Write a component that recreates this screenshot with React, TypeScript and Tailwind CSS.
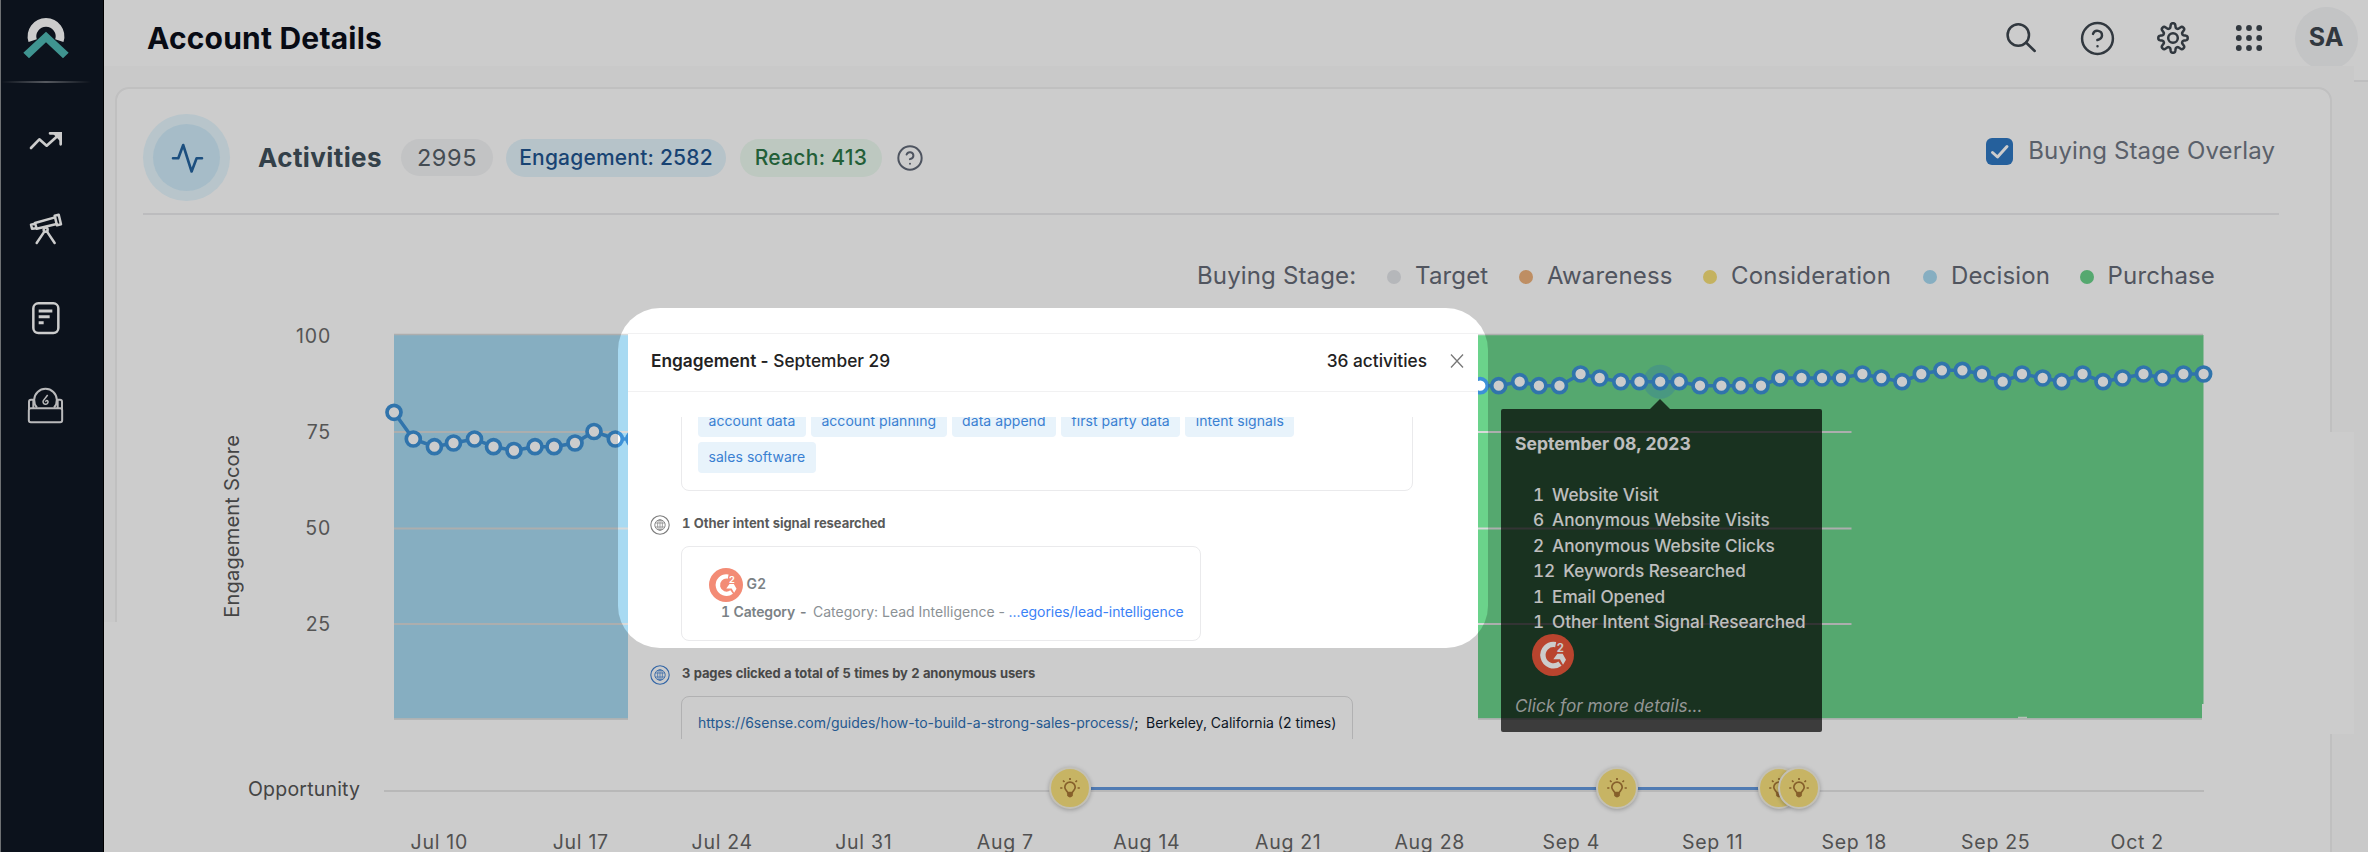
import React from "react";

const leftScores: [number, number][] = [
  [394, 412.3], [413.3, 439], [434.4, 446.7], [453.5, 443], [474.5, 439], [493.5, 446.7],
  [514, 450.5], [535, 446.7], [554, 446.7], [575, 443], [594, 431.5], [615.3, 439], [634, 439],
];

const rightScores: [number, number][] = [
  [1480.3, 385.7], [1498.7, 385.7], [1519.7, 381.7], [1538.9, 385.7], [1559.5, 385.7], [1580.6, 374],
  [1599.7, 378], [1620.8, 381.7], [1639.5, 381.7], [1660.2, 381.7], [1679.3, 381.7], [1700, 385.7],
  [1721.4, 385.7], [1740.6, 385.7], [1761, 385.7], [1780, 378], [1801.5, 378], [1822, 378],
  [1841, 378], [1862.4, 374], [1881.4, 378], [1902, 381.7], [1921.3, 374], [1941.9, 370.3],
  [1962.4, 370.3], [1982, 374], [2002.7, 381.7], [2022, 374], [2042.7, 378], [2061.7, 381.7],
  [2082.6, 374], [2103, 381.7], [2122.5, 378], [2143.5, 374], [2162.5, 378], [2183.4, 374], [2203.6, 374],
];

const dates = [
  "Jul 10", "Jul 17", "Jul 24", "Jul 31", "Aug 7", "Aug 14", "Aug 21", "Aug 28",
  "Sep 4", "Sep 11", "Sep 18", "Sep 25", "Oct 2",
];

const toPoints = (pts: [number, number][]) => pts.map((p) => p.join(",")).join(" ");

function Series({ points }: { points: [number, number][] }) {
  return (
    <g stroke="#3d91d7">
      <polyline points={toPoints(points)} fill="none" strokeWidth="3.500" />
      {points.map(([x, y]) => (
        <circle key={x} cx={x} cy={y} r="7" fill="#fff" strokeWidth="3.700" />
      ))}
    </g>
  );
}

function Logo() {
  return (
    <svg width="48" height="43" viewBox="67 50 144 129">
      <path d="M99 124A42 42 0 1 1 179 124" fill="none" stroke="#fff" strokeWidth="26" />
      <path
        d="M139 97L207 160L190 177L139 129L88 177L71 160Z"
        fill="#4fb9b4"
        stroke="#101723"
        strokeWidth="3"
        paintOrder="stroke"
      />
    </svg>
  );
}

function TrendIcon() {
  return (
    <svg width="36" height="22" viewBox="85 391 108 66" fill="none" stroke="#fff" strokeWidth="8">
      <path d="M94 445L119 419L141 438L181 402" strokeLinecap="round" strokeLinejoin="round" />
      <path d="M151 401H183V434" strokeLinecap="round" />
      <path d="M160 402H183V426Z" fill="#fff" stroke="none" />
    </svg>
  );
}

function TelescopeIcon() {
  return (
    <svg
      width="36"
      height="34"
      viewBox="85 638 108 102"
      fill="none"
      stroke="#fff"
      strokeWidth="7.500"
      strokeLinecap="round"
      strokeLinejoin="round"
    >
      <path d="M165 649L177 646L184 675L172 678Z" />
      <path d="M166 654L106 671L111 688L171 674" />
      <path d="M106 673L94 676L97 688L110 687" />
      <circle cx="138" cy="691" r="6" />
      <path d="M134 697L111 731M142 697L165 731" />
    </svg>
  );
}

function ReportIcon() {
  return (
    <svg width="30" height="34" viewBox="94 900 90 102" fill="none" stroke="#fff" strokeWidth="7.500">
      <rect x="101" y="907" width="75" height="89" rx="15" />
      <path d="M117 930H158M117 947H150M117 965H132" strokeWidth="9" />
    </svg>
  );
}

function FlaskBoxIcon() {
  return (
    <svg width="38" height="38" viewBox="82 1164 114 114" fill="none" stroke="#e8e8ea" strokeWidth="6">
      <rect x="87.500" y="1228" width="100" height="42" rx="6" />
      <path d="M88 1230V1208Q88 1202 94 1202H101V1228M187 1230V1208Q187 1202 181 1202H174V1228" />
      <path d="M112 1226A34 34 0 1 1 163 1226" />
      <path d="M144 1188L131 1205A7.500 7.500 0 1 0 145 1207Q142 1202 137 1208" strokeWidth="4.500" />
    </svg>
  );
}

function SearchIcon() {
  return (
    <svg width="32" height="32" viewBox="0 0 32 32" fill="none" stroke="#3e464f" strokeWidth="2.500" strokeLinecap="round">
      <circle cx="13.300" cy="13" r="10.700" />
      <path d="M21 20.500L29.700 29" />
    </svg>
  );
}

function HelpIcon({ size, color, width }: { size: number; color: string; width: number }) {
  return (
    <svg
      width={size}
      height={size}
      viewBox="0 0 24 24"
      fill="none"
      stroke={color}
      strokeWidth={width}
      strokeLinecap="round"
      strokeLinejoin="round"
    >
      <circle cx="12" cy="12" r="10" />
      <path d="M9.090 9a3 3 0 0 1 5.830 1c0 2-3 3-3 3M12 17h.01" />
    </svg>
  );
}

function gearPath() {
  const out: string[] = [];
  for (let i = 0; i < 160; i++) {
    const a = (i / 160) * Math.PI * 2;
    const r = 12.4 + 2.3 * (Math.tanh(1.9 * Math.cos(8 * a)) / Math.tanh(1.9));
    out.push(`${(r * Math.cos(a)).toFixed(2)} ${(r * Math.sin(a)).toFixed(2)}`);
  }
  return "M" + out.join("L") + "Z";
}

function GearIcon() {
  return (
    <svg width="34" height="34" viewBox="-17 -17 34 34" fill="none" stroke="#3e464f" strokeWidth="2.500" strokeLinejoin="round">
      <path d={gearPath()} />
      <circle r="4.800" />
    </svg>
  );
}

function AppsIcon() {
  return (
    <svg width="28" height="28" viewBox="-14 -14 28 28" fill="#3e464f">
      {[-10.2, 0, 10.2].map((x) => [-10, 0, 10].map((y) => <circle key={`${x},${y}`} cx={x} cy={y} r="2.900" />))}
    </svg>
  );
}

function G2Logo({ size, color }: { size: number; color: string }) {
  return (
    <svg width={size} height={size} viewBox="-63 -63 126 126" className="shrink-0">
      <circle r="63" fill={color} />
      <path d="M8 -31A32 32 0 1 0 21 26" fill="none" stroke="#fff" strokeWidth="16" />
      <path d="M1 13L13 -4H29L39 14L30 29L21 13Z" fill="#fff" />
      <text x="11" y="-9" fontSize="34" fontWeight="700" fontFamily="Inter, sans-serif" fill="#fff">
        2
      </text>
    </svg>
  );
}

function GlobeIcon({ color }: { color: string }) {
  return (
    <svg width="20" height="20" viewBox="-10 -10 20 20" fill="none" stroke={color} className="shrink-0">
      <circle r="9.200" strokeWidth="1.100" />
      <circle r="5.200" strokeWidth="0.900" />
      <ellipse rx="2.400" ry="5.200" strokeWidth="0.700" />
      <path d="M0 -5.200V5.200M-4.700 -2H4.700M-4.700 2H4.700" strokeWidth="0.700" />
    </svg>
  );
}

function Opportunity({ className }: { className: string }) {
  return (
    <div
      className={`absolute top-[7px] flex size-[42px] items-center justify-center rounded-full border-2 border-[#f4f1e4] bg-[#f9e27e] shadow-[0_1px_4px_rgba(0,0,0,0.25)] ${className}`}
    >
      <svg width="22" height="22" viewBox="-11 -11 22 22" fill="none" stroke="#a87836" strokeWidth="1.700">
        <path d="M-2.300 4.600C-2.300 3.400 -5.200 2.300 -5.200 -0.700A5.200 5.200 0 0 1 5.200 -0.700C5.200 2.300 2.300 3.400 2.300 4.600Z" />
        <path d="M-2 5.500H2V7.500Q0 9.500 -2 7.500Z" fill="#a87836" />
        <path d="M0 -10V-8M-7 -7.500L-5.500 -6M7 -7.500L5.500 -6M-9.800 0H-7.600M9.800 0H7.600" />
      </svg>
    </div>
  );
}

function Sidebar() {
  return (
    <aside className="flex w-[104px] shrink-0 flex-col items-center border-r border-l border-r-black border-l-[#8a8c90] bg-[#101723] pr-[12px]">
      <div className="flex h-[81px] items-start pt-[16px]">
        <Logo />
      </div>
      <div className="h-[2px] w-full bg-gradient-to-r from-transparent via-[#6c7078] to-transparent" />
      <nav className="mt-[14px] flex flex-col">
        <div className="flex h-[88.300px] items-center justify-center"><TrendIcon /></div>
        <div className="flex h-[88.300px] items-center justify-center"><TelescopeIcon /></div>
        <div className="flex h-[88.300px] items-center justify-center"><ReportIcon /></div>
        <div className="flex h-[88.300px] items-center justify-center"><FlaskBoxIcon /></div>
      </nav>
    </aside>
  );
}

function Header() {
  return (
    <header className="flex h-[66px] shrink-0 items-center justify-between overflow-hidden bg-white pt-[10px] pr-[3px] pl-[43px]">
      <h1 className="text-[30px] leading-none font-bold tracking-[0.200px] text-[#0b0e1a]">Account Details</h1>
      <div className="flex h-[56px] items-center">
        <div className="flex w-[76px] justify-center"><SearchIcon /></div>
        <div className="flex w-[76px] justify-center"><HelpIcon size={37} color="#3e464f" width={1.6} /></div>
        <div className="flex w-[76px] justify-center"><GearIcon /></div>
        <div className="flex w-[76px] justify-center"><AppsIcon /></div>
        <div className="flex w-[78px] justify-center">
          <div className="flex size-[63px] shrink-0 items-center justify-center rounded-full bg-[#f4f5f7] text-[25px] font-bold text-[#3e464f]">
            SA
          </div>
        </div>
      </div>
    </header>
  );
}

function CardHeader() {
  return (
    <div className="mr-[51px] ml-[26px] flex h-[126px] items-center justify-between border-b-2 border-[#ececee]">
      <div className="flex items-center pt-[13px]">
        <div className="flex size-[87px] items-center justify-center rounded-full bg-[#e6f7fe]">
          <div className="flex size-[67px] items-center justify-center rounded-full bg-[#d0ecfb]">
            <svg width="36" height="32" viewBox="168 141 36 32" fill="none" stroke="#24639f" strokeWidth="2.600" strokeLinecap="round" strokeLinejoin="round">
              <path d="M172 157.300H177.300L182.200 144L190.600 170.500L195.600 157.300H201" />
            </svg>
          </div>
        </div>
        <h2 className="ml-[28px] w-[143px] text-[26px] leading-none font-bold tracking-[0.400px] text-[#40515c]">Activities</h2>
        <div className="flex h-[37px] w-[92px] items-center justify-center rounded-full bg-[#f3f4f6] text-[23.500px] tracking-[0.600px] text-[#555f68]">
          2995
        </div>
        <div className="ml-[13px] flex h-[38px] w-[220px] items-center justify-center rounded-full bg-[#e4f4fc] text-[21px] font-medium tracking-[0.200px] text-[#1f5490]">
          Engagement: 2582
        </div>
        <div className="ml-[14px] flex h-[38px] w-[142px] items-center justify-center rounded-full bg-[#edfbf1] text-[21px] font-medium tracking-[0.300px] text-[#2c7746]">
          Reach: 413
        </div>
        <div className="ml-[14px]"><HelpIcon size={28} color="#626a78" width={1.7} /></div>
      </div>
      <div className="flex items-center pt-[1px] pr-[4px]">
        <div className="flex size-[27px] items-center justify-center rounded-[6px] bg-[#2f78c4]">
          <svg width="20" height="16" viewBox="0 0 20 16" fill="none" stroke="#fff" strokeWidth="3" strokeLinecap="round" strokeLinejoin="round">
            <path d="M2.500 8.500L7.500 13L17 2.500" />
          </svg>
        </div>
        <span className="-mt-[2px] ml-[15px] text-[24px] leading-none tracking-[0.120px] text-[#717885]">Buying Stage Overlay</span>
      </div>
    </div>
  );
}

function LegendItem({ dot, label, width }: { dot: string; label: string; width: string }) {
  return (
    <div className={`flex items-center ${width}`}>
      <span className={`mt-[3px] mr-[14px] size-[14px] rounded-full ${dot}`} />
      {label}
    </div>
  );
}

function Legend() {
  return (
    <div className="flex h-[119px] items-center pt-[2px] pl-[1080px] text-[24px] leading-none tracking-[0.150px] text-[#666b77]">
      <span className="w-[190px]">Buying Stage:</span>
      <LegendItem dot="bg-[#e3e5e9]" label="Target" width="w-[132px]" />
      <LegendItem dot="bg-[#eeb27c]" label="Awareness" width="w-[184px]" />
      <LegendItem dot="bg-[#f6df78]" label="Consideration" width="w-[220px]" />
      <LegendItem dot="bg-[#a8daf2]" label="Decision" width="w-[157px]" />
      <LegendItem dot="bg-[#6bd38b]" label="Purchase" width="w-[135px]" />
    </div>
  );
}

function Chart() {
  return (
    <div className="flex h-[402px]">
      <div className="ml-[90px] flex w-[50px] shrink-0 items-center justify-center pb-[17px]">
        <span className="rotate-180 text-[20px] leading-none tracking-[0.200px] text-[#555] [writing-mode:vertical-rl]">Engagement Score</span>
      </div>
      <div className="-mt-[46px] flex w-[74px] shrink-0 flex-col text-right text-[19.500px] tracking-[0.800px] text-[#6b6b6b]">
        <div className="h-[96px] leading-[96px]">100</div>
        <div className="h-[96px] leading-[96px]">75</div>
        <div className="h-[96px] leading-[96px]">50</div>
        <div className="h-[96px] leading-[96px]">25</div>
      </div>
      <svg className="ml-[53px] shrink-0 overflow-visible" width="1830" height="402" viewBox="384 334 1830 402">
        <defs>
          <clipPath id="decision-clip">
            <rect x="370" y="330" width="258" height="400" />
          </clipPath>
          <clipPath id="purchase-clip">
            <rect x="1478" y="330" width="760" height="400" />
          </clipPath>
        </defs>
        <rect x="394" y="335" width="234" height="383.500" fill="#a8daf2" />
        <path d="M1478 335H2203.500V704H2202V718.500H1478Z" fill="#6bd38b" />
        <path d="M394 334.500H628M1478 334.500H2203M394 719H628M1478 719H2202" stroke="#d9dada" strokeWidth="1.500" />
        <path d="M394 432H628M1478 432H1851.500M394 528.500H628M1478 528.500H1851.500M394 624H628M1478 624H1851.500" stroke="#d8dada" strokeWidth="2" />
        <path d="M2018 717.500H2027" stroke="#e4f2e8" strokeWidth="1.500" />
        <g clipPath="url(#decision-clip)">
          <Series points={leftScores} />
        </g>
        <g clipPath="url(#purchase-clip)">
          <circle cx="1660.200" cy="381.700" r="17" fill="#3d91d7" fillOpacity="0.300" />
          <Series points={rightScores} />
        </g>
      </svg>
    </div>
  );
}

function Timeline() {
  return (
    <div className="relative flex h-[56px] items-center pl-[131px]">
      <span className="mt-[4px] w-[136px] text-[19.500px] leading-none tracking-[0.200px] text-[#555]">Opportunity</span>
      <div className="mt-[5px] h-[2px] w-[1820px] bg-[#e6e6e7]" />
      <div className="absolute top-[27px] left-[974px] h-[3px] w-[675px] bg-[#659ae0]" />
      <Opportunity className="left-[932px]" />
      <Opportunity className="left-[1479px]" />
      <Opportunity className="left-[1641px]" />
      <Opportunity className="left-[1661px]" />
    </div>
  );
}

function DateAxis() {
  return (
    <div className="flex pt-[16px] pl-[251.500px] text-[19.500px] leading-[20px] tracking-[0.700px] text-[#666]">
      {dates.map((d) => (
        <span key={d} className="w-[141.500px] shrink-0 text-center">{d}</span>
      ))}
    </div>
  );
}

function Tag({ children }: { children: React.ReactNode }) {
  return (
    <span className="flex h-[31px] items-center rounded-[4px] bg-[#e8f3fb] px-[10.500px] pb-[2px] text-[14px] tracking-[0.050px] text-[#3a80d2]">
      {children}
    </span>
  );
}

function ActivityPanel() {
  return (
    <section className="absolute top-[333px] left-[628px] flex h-[406px] w-[850px] flex-col overflow-hidden bg-white">
      <div className="flex h-[59px] shrink-0 items-center justify-between border-y border-[#f1f1f2] pr-[14px] pb-[4px] pl-[23px] text-[17.300px] font-medium text-[#222]">
        <div>
          <span className="font-semibold">Engagement -</span> September 29
        </div>
        <div className="flex items-center">
          36 activities
          <svg className="ml-[23px]" width="14" height="14" viewBox="0 0 14 14" stroke="#777" strokeWidth="1.300">
            <path d="M1 0.500L13 13.500M13 0.500L1 13.500" />
          </svg>
        </div>
      </div>
      <div className="mt-[25px] flex flex-1 flex-col overflow-hidden">
        <div className="-mt-[20px] ml-[53px] flex h-[94px] w-[732px] shrink-0 flex-col gap-[5px] rounded-[8px] border border-[#eaeaec] px-[16px] pt-[8px]">
          <div className="flex gap-[5px]">
            <Tag>account data</Tag>
            <Tag>account planning</Tag>
            <Tag>data append</Tag>
            <Tag>first party data</Tag>
            <Tag>intent signals</Tag>
          </div>
          <div className="flex">
            <Tag>sales software</Tag>
          </div>
        </div>
        <div className="mt-[21px] flex h-[24px] shrink-0 items-center gap-[12px] pt-[2px] pl-[22px] text-[13px] font-bold tracking-[-0.060px] text-[#5a5a5a] tabular-nums">
          <GlobeIcon color="#7d7d7d" />
          <span className="-mt-[3px]">1 Other intent signal researched</span>
        </div>
        <div className="mt-[10px] ml-[53px] flex h-[95px] w-[520px] shrink-0 flex-col rounded-[8px] border border-[#eaeaec] pt-[21px] text-[14px] leading-none text-[#8b9195]">
          <div className="flex items-center gap-[3.500px] pl-[27px]">
            <G2Logo size={34} color="#f38b75" />
            <span className="-mt-[3px] font-semibold tracking-[0.300px] text-[#7b8286]">G2</span>
          </div>
          <div className="flex h-[20px] items-center pl-[39px] whitespace-pre">
            <span className="w-[92px] font-semibold tracking-[-0.150px] text-[#7b8286] tabular-nums">1 Category -</span>
            <span className="w-[185.500px]">Category: Lead Intelligence</span>
            <span className="w-[10px]">-</span>
            <span className="tracking-[-0.060px] text-[#3b82f6]">...egories/lead-intelligence</span>
          </div>
        </div>
        <div className="mt-[22px] flex h-[24px] shrink-0 items-center gap-[12px] pl-[22px] text-[13px] font-bold tracking-[-0.100px] text-[#5a5a5a] tabular-nums">
          <GlobeIcon color="#3f7fd0" />
          <span className="-mt-[3px]">3 pages clicked a total of 5 times by 2 anonymous users</span>
        </div>
        <div className="mt-[9px] ml-[53px] flex h-[80px] w-[672px] shrink-0 rounded-[8px] border border-[#dededf] pt-[19px] pl-[16px] text-[14px] leading-none text-[#101c2e]">
          <span className="w-[448px]"><span className="text-[#2e6fb4]">https://6sense.com/guides/how-to-build-a-strong-sales-process/</span>;</span>
          <span>Berkeley, California (2 times)</span>
        </div>
      </div>
    </section>
  );
}

const tooltipRows: [string, string][] = [
  ["1", "Website Visit"],
  ["6", "Anonymous Website Visits"],
  ["2", "Anonymous Website Clicks"],
  ["12", "Keywords Researched"],
  ["1", "Email Opened"],
  ["1", "Other Intent Signal Researched"],
];

function ScoreTooltip() {
  return (
    <div className="absolute top-[399px] left-[1501px] w-[321px]">
      <svg className="ml-[149px] block" width="20" height="10" viewBox="0 0 20 10">
        <path d="M10 0L20 10H0Z" fillOpacity="0.700" />
      </svg>
      <div className="flex h-[323px] flex-col rounded-[2px] bg-black/70 pl-[14px] text-[17.200px] text-[#eee]">
        <div className="mt-[22px] text-[17.500px] leading-[26px] font-bold">September 08, 2023</div>
        <div className="mt-[25px] flex flex-col pl-[18px] font-medium tracking-[-0.050px]">
          {tooltipRows.map(([count, label]) => (
            <div key={label} className="flex h-[25.500px] items-center gap-[8px]">
              <span className="tabular-nums">{count}</span>
              <span>{label}</span>
            </div>
          ))}
        </div>
        <div className="-mt-[1px] pl-[17px]">
          <G2Logo size={42} color="#e8563a" />
        </div>
        <div className="mt-[17px] leading-[26px] text-[#b9bcbb] italic">Click for more details...</div>
      </div>
    </div>
  );
}

export default function App() {
  return (
    <div className="relative flex h-[852px] w-[2368px] overflow-hidden bg-white font-['Inter',sans-serif]">
      <Sidebar />
      <main className="flex min-w-0 flex-1 flex-col bg-[#fcfcfc]">
        <Header />
        <div className="mt-[21px] ml-[11px] h-[830px] w-[2217px] shrink-0 rounded-[14px] border-2 border-[#f0f0f1] bg-white">
          <CardHeader />
          <Legend />
          <Chart />
          <div className="pt-[24px]">
            <Timeline />
            <DateAxis />
          </div>
        </div>
      </main>
      <div className="absolute top-[66px] left-[2354px] h-[16px] w-[14px] border-b-2 border-[#eeeeef] bg-white" />
      <div className="absolute top-[432px] left-[2329px] h-[302px] w-[25px] bg-white" />
      <div className="absolute top-[622px] left-[104px] h-[230px] w-[13px] bg-white" />
      <ScoreTooltip />
      <ActivityPanel />
      <div className="pointer-events-none absolute top-[308px] left-[618px] h-[340px] w-[870px] rounded-[42px] shadow-[0_0_0_2400px_rgba(0,0,0,0.2)]" />
    </div>
  );
}
